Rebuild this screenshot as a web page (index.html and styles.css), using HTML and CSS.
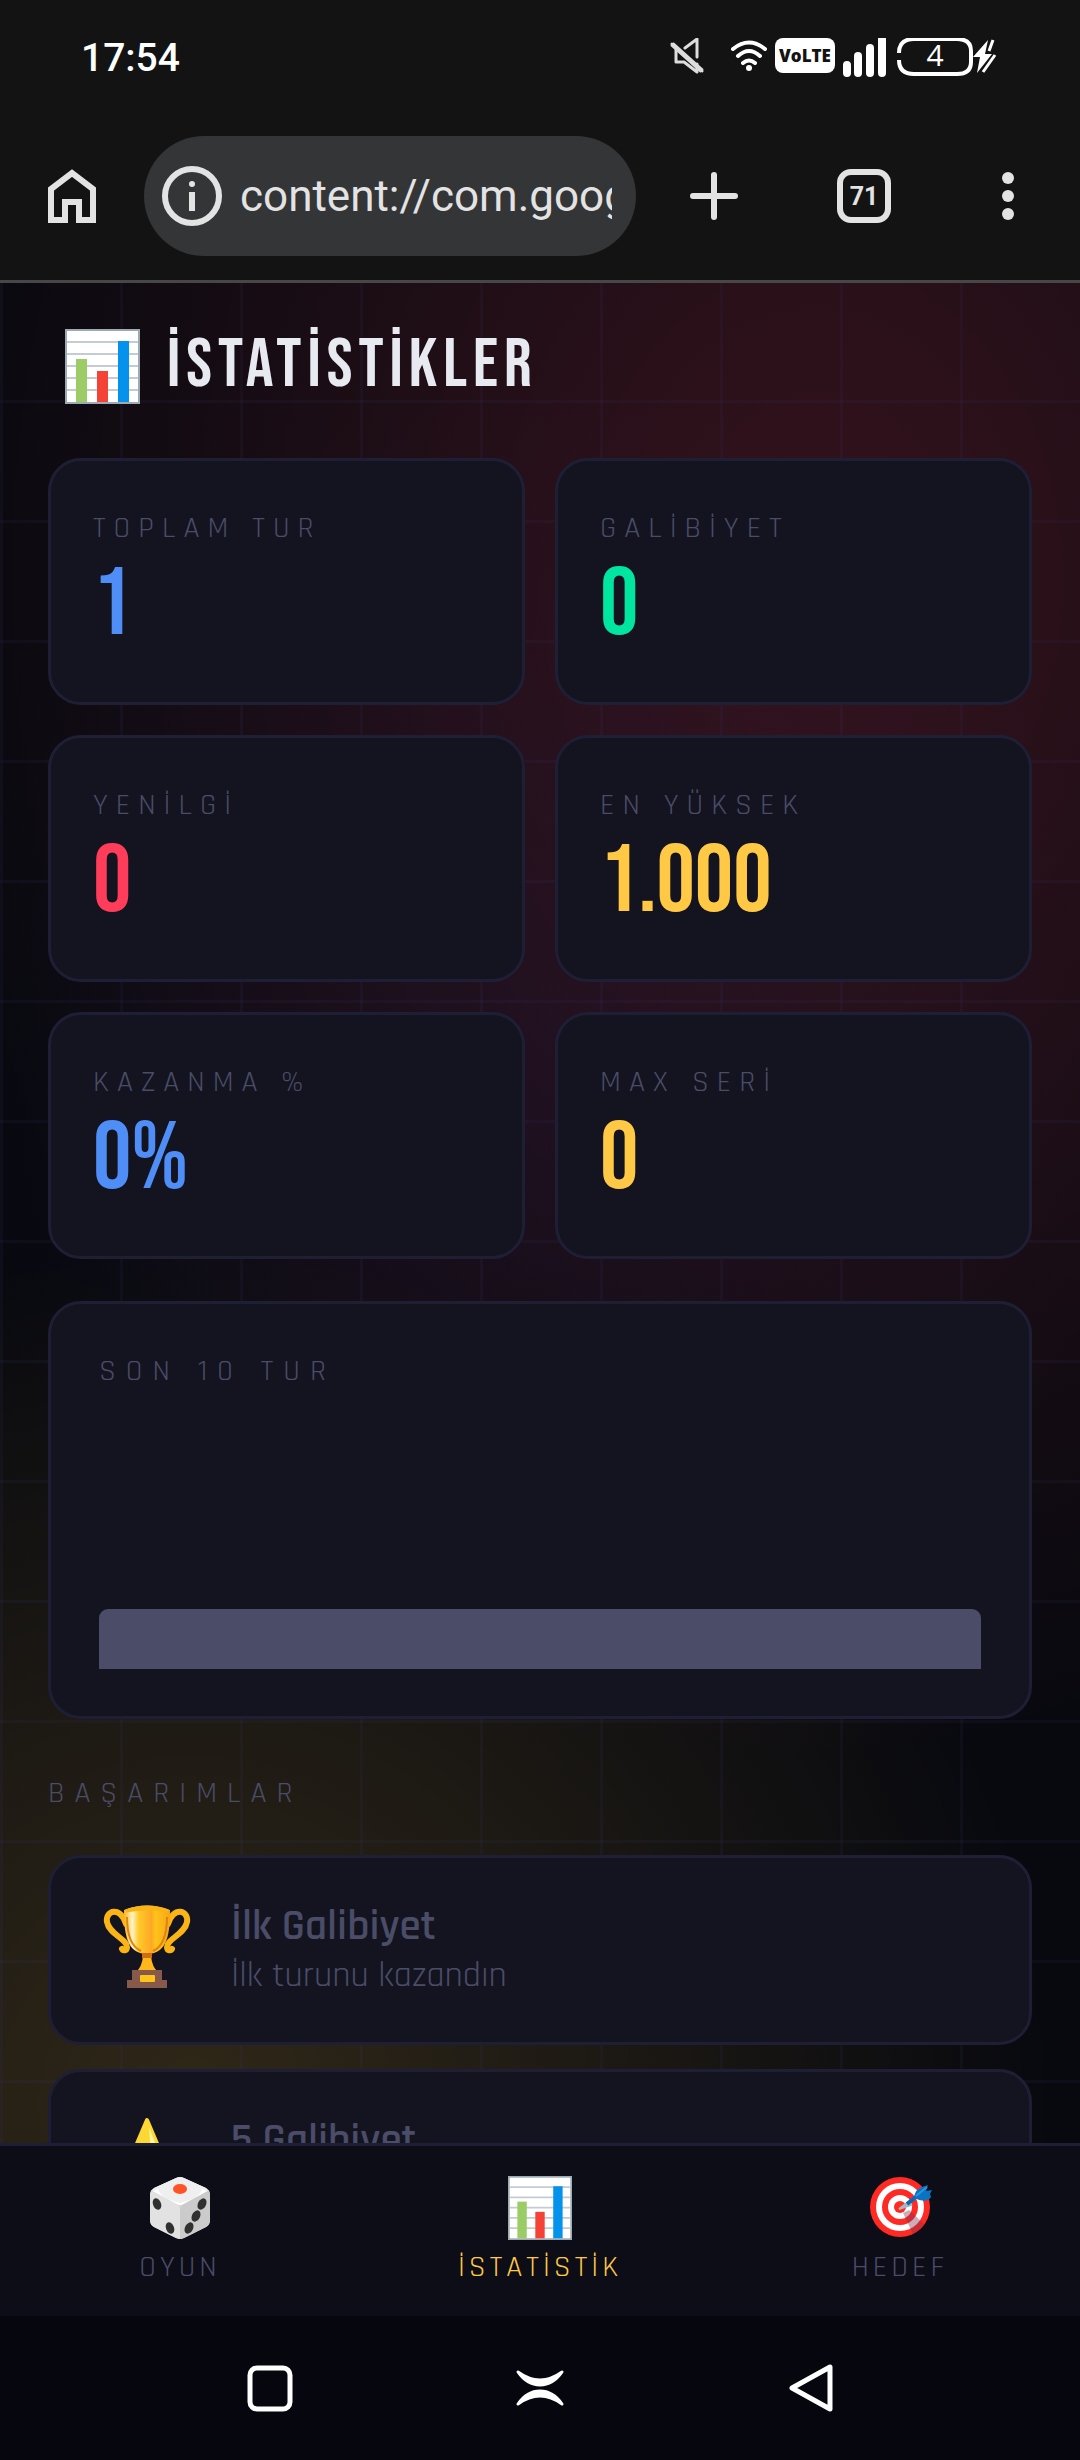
FILE: index.html
```
<!DOCTYPE html>
<html lang="tr">
<head>
    <meta charset="UTF-8">
    <meta name="viewport" content="width=device-width, initial-scale=1.0">
    <title>İstatistikler</title>
    <link rel="stylesheet" href="styles.css">
</head>
<body>
    <!-- shared icons -->
    <svg class="defs" aria-hidden="true">
        <defs>
            <linearGradient id="cup" x1="0" x2="1">
                <stop offset="0" stop-color="#fdb515"/><stop offset=".18" stop-color="#fff3c8"/>
                <stop offset=".32" stop-color="#ffca28"/><stop offset=".6" stop-color="#ffa726"/>
                <stop offset=".68" stop-color="#ffc41a"/><stop offset="1" stop-color="#f9a516"/>
            </linearGradient>
            <symbol id="chart" viewBox="0 0 75 75" preserveAspectRatio="none">
                <rect x="1" y="1" width="73" height="73" fill="#fff" stroke="#9daab1" stroke-width="2"/>
                <path d="M2 13h71M2 25h71M2 37h71M2 49h71M2 61h71" stroke="#c3ccd2" stroke-width="2"/>
                <path d="M11 30h11v43H11z" fill="#9ccc65"/>
                <path d="M32 42h11v31H32z" fill="#f44336"/>
                <path d="M53 12h11v61H53z" fill="#0492ec"/>
            </symbol>
        </defs>
    </svg>

    <div class="status-bar">
        <span class="clock">17:54</span>
        <div class="status-icons">
            <svg width="340" height="50" viewBox="0 0 340 50" fill="none" stroke="#fff">
                <path d="M2 6l30 27M6 11v13h8l13 10V26M15 10l12-9v18" stroke="#ddd" stroke-width="3" stroke-linejoin="round" stroke-linecap="round"/>
                <path d="M2 6l30 27" stroke="#ddd" stroke-width="5"/>
                <path d="M63 11q16-13 32 0M68 18q11-10 22 0M73 25q6-5 12 0" stroke-width="4" stroke-linecap="round"/>
                <circle cx="79" cy="30" r="3" fill="#fff" stroke="none"/>
                <rect x="105" y="0" width="60" height="35" rx="8" fill="#fff" stroke="none"/>
                <text class="volte" x="135" y="24" text-anchor="middle">VoLTE</text>
                <path d="M177 27v8M188 18v17M200 10v25M212 1v34" stroke-width="8" stroke-linecap="round"/>
                <path d="M229 15q0-14 15-14h43q14 0 14 12v11q0 12-14 12h-43q-15 0-15-14" stroke-width="4"/>
                <text class="battery" x="265" y="28" text-anchor="middle">4</text>
                <path d="M318 2l-15 17h7l-3 16 15-19h-7z" fill="#fff" stroke="none"/>
                <path d="M323 2l-4 11M325 17l-12 17" stroke-width="3"/>
            </svg>
        </div>
    </div>

    <header class="browser-bar">
        <button class="icon-btn" aria-label="Ana sayfa">
            <svg width="48" height="54" viewBox="0 0 48 54" fill="none" stroke="#e3e3e3" stroke-width="6"><path d="M3 51V20L24 4l21 16v31H31V33H17v18z"/></svg>
        </button>
        <div class="address">
            <svg width="60" height="60" viewBox="0 0 60 60"><circle cx="30" cy="30" r="27" fill="none" stroke="#e3e3e3" stroke-width="6"/><circle cx="30" cy="18" r="3" fill="#e3e3e3"/><path d="M27 26h6v19h-6z" fill="#e3e3e3"/></svg>
            <input type="text" aria-label="Adres" value="content://com.google.android">
        </div>
        <button class="icon-btn" aria-label="Yeni sekme">
            <svg width="48" height="48" viewBox="0 0 48 48" stroke="#e3e3e3" stroke-width="6" stroke-linecap="round"><path d="M24 3v42M3 24h42"/></svg>
        </button>
        <button class="icon-btn tabs">71</button>
        <button class="icon-btn menu" aria-label="Menü">
            <svg width="12" height="48" viewBox="0 0 12 48" fill="#e3e3e3"><circle cx="6" cy="6" r="6"/><circle cx="6" cy="24" r="6"/><circle cx="6" cy="42" r="6"/></svg>
        </button>
    </header>

    <main class="page">
        <h1 class="title"><svg class="title-icon" width="75" height="75"><use href="#chart"/></svg>İSTATİSTİKLER</h1>

        <section class="stats">
            <div class="card stat"><div class="label">TOPLAM TUR</div><div class="value blue">1</div></div>
            <div class="card stat"><div class="label">GALİBİYET</div><div class="value green">0</div></div>
            <div class="card stat"><div class="label">YENİLGİ</div><div class="value red">0</div></div>
            <div class="card stat"><div class="label">EN YÜKSEK</div><div class="value gold">1.000</div></div>
            <div class="card stat"><div class="label">KAZANMA %</div><div class="value blue">0%</div></div>
            <div class="card stat"><div class="label">MAX SERİ</div><div class="value gold">0</div></div>
        </section>

        <section class="card history">
            <div class="label wide">SON 10 TUR</div>
            <div class="bars"><div class="bar" style="height: 30%"></div></div>
        </section>

        <h2 class="label wide section-title">BAŞARIMLAR</h2>
        <section class="achievements">
            <div class="card achievement">
                <svg width="96" height="96" viewBox="0 0 96 96">
                    <g fill="none" stroke="#fbb416" stroke-width="6" stroke-linecap="round">
                        <path d="M27 22C22 4 6 8 8 20c2 12 20 17 20 25 0 4-4 4-5 2"/>
                        <path d="M69 22c5-18 21-14 19-2-2 12-20 17-20 25 0 4 4 4 5 2"/>
                    </g>
                    <path d="M25 8q23-9 46 0c0 22-2 44-23 44S25 30 25 8z" fill="url(#cup)"/>
                    <path d="M27 9q21-8 42 0-21-4-42 0z" fill="#d07a12" stroke="#fbb416" stroke-width="3"/>
                    <path d="M28 15c0 18 5 30 14 34M68 15c0 18-5 30-14 34" fill="none" stroke="#dd8415" stroke-width="2"/>
                    <path d="M44 54h8q1 11 7 16H37q6-5 7-16z" fill="#ffb71b"/>
                    <path d="M43 51h10v5H43z" fill="#ce6d14"/>
                    <path d="M33 68h30v10h5v8H28v-8h5z" fill="#86594b"/>
                    <rect x="41" y="73" width="15" height="7" rx="1" fill="#ffc41a"/>
                </svg>
                <div>
                    <h3>İlk Galibiyet</h3>
                    <p>İlk turunu kazandın</p>
                </div>
            </div>
            <div class="card achievement">
                <svg width="96" height="96" viewBox="0 0 96 96">
                    <path d="M48 4l14 33 31 4-23 22 6 31-28-15-28 15 6-31L3 41l31-4z" fill="#fdd835" stroke="#fdd835" stroke-width="4" stroke-linejoin="round"/>
                    <path d="M50 11l10 26 10 3-18-1z" fill="#fff59d"/>
                </svg>
                <div>
                    <h3>5 Galibiyet</h3>
                </div>
            </div>
        </section>
    </main>

    <nav class="tab-bar">
        <button class="tab">
            <svg width="64" height="64" viewBox="0 0 64 64">
                <path d="M28 2q4-2 8 0l22 10q4 2 4 6v26q0 5-4 7L36 62q-4 2-8 0L6 51q-4-2-4-7V18q0-4 4-6z" fill="#d9d9d9"/>
                <path d="M28 2q4-2 8 0l22 10 2 3-24 13q-4 2-8 0L4 15l2-3z" fill="#efefef"/>
                <path d="M4 15l24 13q4 2 4 6v29l-4-1L6 51q-4-2-4-7V18z" fill="#e2e2e2"/>
                <path d="M60 15L36 28q-4 2-4 6v29l4-1 22-11q4-2 4-7V18z" fill="#cbcbcb"/>
                <path d="M5 15l5-2q2 9 22 14 20-5 22-14l5 2-24 13q-3 2-6 0z" fill="#fff"/>
                <ellipse cx="32" cy="13" rx="7" ry="5" fill="#ff5226"/>
                <g fill="#303030"><ellipse cx="9" cy="28" rx="4" ry="6" transform="rotate(-22 9 28)"/><ellipse cx="22" cy="52" rx="4" ry="6" transform="rotate(-22 22 52)"/><ellipse cx="54" cy="28" rx="4" ry="6" transform="rotate(28 54 28)"/><ellipse cx="48" cy="40" rx="4" ry="6" transform="rotate(28 48 40)"/><ellipse cx="41" cy="52" rx="4" ry="6" transform="rotate(28 41 52)"/></g>
            </svg>
            OYUN
        </button>
        <button class="tab active">
            <svg width="64" height="64"><use href="#chart"/></svg>
            İSTATİSTİK
        </button>
        <button class="tab">
            <svg width="64" height="64" viewBox="0 0 64 64">
                <circle cx="32" cy="31" r="30" fill="#ff2a23"/><circle cx="32" cy="31" r="24" fill="#fff"/><circle cx="32" cy="31" r="18" fill="#ff2a23"/><circle cx="32" cy="31" r="12" fill="#fff"/><circle cx="32" cy="31" r="6" fill="#ff2a23"/>
                <path d="M35 37l6-3 15 14q-5 7-11 10z" fill="#7c3050" opacity=".4"/>
                <path d="M31 33l9-7 3 3z" fill="#a9b8c0" stroke="#a9b8c0" stroke-width="2"/>
                <path d="M39 28l10-8" stroke="#0969b8" stroke-width="4"/>
                <path d="M46 22q1-9 8-11l6-2-2 6 6-1-2 4 1 3q-4 7-17 1z" fill="#0a73c2"/>
                <path d="M48 20l11-9" stroke="#2f93e0" stroke-width="2"/>
            </svg>
            HEDEF
        </button>
    </nav>

    <footer class="system-bar">
        <button aria-label="Son uygulamalar"><svg width="48" height="48" viewBox="0 0 48 48" fill="none" stroke="#fff" stroke-width="5"><rect x="4" y="4" width="40" height="41" rx="7"/></svg></button>
        <button aria-label="Ana ekran"><svg width="50" height="48" viewBox="0 0 50 48" fill="#fff" stroke="#fff" stroke-width="3" stroke-linejoin="round"><path d="M3 8q22 16 44 0-9 13-22 13T3 8zM3 40q22-16 44 0-9-13-22-13T3 40z"/></svg></button>
        <button aria-label="Geri"><svg width="48" height="50" viewBox="0 0 48 50" fill="none" stroke="#fff" stroke-width="5" stroke-linejoin="round"><path d="M44 4v42L6 25z"/></svg></button>
    </footer>
</body>
</html>
```
FILE: styles.css
```
* { box-sizing: border-box; }
body { font-family: Rajdhani, Roboto, sans-serif; background: #05050d; color: #e8eaf2; margin: 0; height: 100vh; display: flex; flex-direction: column; overflow: hidden; }
button { background: none; border: 0; padding: 0; font: inherit; color: inherit; }
svg { display: block; flex: none; }
.defs { position: absolute; width: 0; height: 0; }

/* phone status bar */
.status-bar { background: #131313; display: flex; justify-content: space-between; align-items: center; height: 116px; padding: 0 70px 0 81px; flex: none; font-family: Roboto, sans-serif; }
.clock { font-size: 39px; font-weight: 500; color: #fff; }
.status-icons { padding-top: 10px; }
.volte { font: 800 17px "Open Sans", sans-serif; fill: #131313; stroke: none; }
.battery { font: 30px "Open Sans", sans-serif; fill: #fff; stroke: none; }

/* browser toolbar */
.browser-bar { background: #131313; border-bottom: 3px solid #474747; display: flex; align-items: center; padding: 20px 24px 24px; flex: none; font-family: Roboto, sans-serif; }
.icon-btn { flex: none; width: 96px; display: flex; justify-content: center; }
.address { flex: 1; min-width: 0; height: 120px; margin: 0 30px 0 24px; padding: 0 24px 0 18px; border-radius: 60px; background: #343537; display: flex; align-items: center; gap: 18px; }
.address input { flex: 1; min-width: 0; background: none; border: 0; padding: 0; font: 44px Roboto, sans-serif; color: #e3e3e3; }
.tabs { width: 54px; height: 54px; margin: 0 69px 0 75px; border: 6px solid #e3e3e3; border-radius: 14px; align-items: center; font-size: 25px; font-weight: 700; color: #e3e3e3; }

/* page */
.page {
    flex: 1; min-height: 0; overflow: hidden; padding: 36px 48px 0;
    background:
        linear-gradient(rgba(60, 60, 120, .1) 3px, transparent 3px) 0 -3px / 120px 120px,
        linear-gradient(90deg, rgba(60, 60, 120, .1) 3px, transparent 3px) 0 0 / 120px 120px,
        radial-gradient(ellipse 900px 1180px at 76% 16%, rgba(255, 61, 90, .18), transparent),
        radial-gradient(ellipse 860px 860px at 18% 98%, rgba(255, 200, 70, .16), transparent),
        radial-gradient(ellipse 600px 700px at 50% 42%, rgba(79, 80, 247, .05), transparent),
        #08090f;
}
.title { display: flex; align-items: center; gap: 27px; height: 94px; margin: 0 0 45px; padding-left: 17px; font-family: "Bebas Neue", Roboto, sans-serif; font-size: 69px; font-weight: 400; line-height: 94px; letter-spacing: 6px; }
.card { background: #13141f; border: 3px solid #1e1f35; border-radius: 33px; }
.label { font-size: 30px; font-weight: 400; line-height: 36px; letter-spacing: 8px; color: #4a4c68; margin: 0; }
.wide { letter-spacing: 10px; }
.stats { display: grid; grid-template-columns: 1fr 1fr; gap: 30px; margin-bottom: 42px; }
.stat { padding: 49px 42px 36px; }
.value { font-family: "Bebas Neue", Roboto, sans-serif; font-size: 96px; font-weight: 400; line-height: 120px; }
.blue { color: #4f8ef7; }
.green { color: #00e5a0; }
.red { color: #ff3d5a; }
.gold { color: #ffc845; }
.history { padding: 49px 48px 47px; }
.bars { display: flex; align-items: flex-end; gap: 12px; height: 200px; margin-top: 80px; }
.bar { flex: 1; background: #4a4c68; border-radius: 9px 9px 0 0; }
.section-title { margin: 56px 0 44px; }
.achievements { display: grid; gap: 24px; }
.achievement { display: flex; align-items: center; gap: 36px; height: 190px; padding: 0 48px; color: #4a4c68; }
.achievement h3 { margin: 0; font-size: 43px; font-weight: 600; line-height: 52px; }
.achievement h3:only-child { margin-bottom: 46px; }
.achievement p { margin: 0; font-size: 36px; font-weight: 400; line-height: 46px; }

/* bottom navigation */
.tab-bar { flex: none; display: flex; height: 173px; background: #0d0d17; border-top: 3px solid #1e1f35; }
.tab { flex: 1; display: flex; flex-direction: column; align-items: center; gap: 9px; padding-top: 30px; font-size: 30px; font-weight: 400; line-height: 36px; letter-spacing: 4px; color: #4a4c68; }
.active { color: #ffc845; }

.system-bar { flex: none; display: flex; justify-content: center; height: 144px; background: #05060e; }
.system-bar button { width: 270px; display: flex; justify-content: center; align-items: center; }
```
